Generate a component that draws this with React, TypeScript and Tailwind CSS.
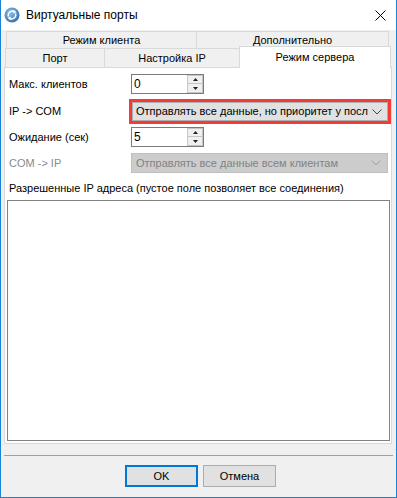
import React from "react";

const font = { fontFamily: '"Liberation Sans", Arial, sans-serif' };

function AppIcon() {
  return (
    <svg width="16" height="16" viewBox="0 0 16 16" className="shrink-0">
      <defs>
        <radialGradient id="g" cx="40%" cy="35%" r="70%">
          <stop offset="0%" stopColor="#8fc3ea" />
          <stop offset="100%" stopColor="#2f6fa8" />
        </radialGradient>
      </defs>
      <circle cx="8" cy="8" r="7.5" fill="url(#g)" />
      <path d="M4.5 9.5 A4 4 0 0 1 10.5 4.8" stroke="#fff" strokeWidth="1.4" fill="none" />
      <path d="M9.6 3.4 L11.4 5 L9.3 6" stroke="#fff" strokeWidth="1.2" fill="none" />
      <path d="M11.5 6.5 A4 4 0 0 1 5.5 11.2" stroke="#fff" strokeWidth="1.4" fill="none" />
      <path d="M6.4 12.6 L4.6 11 L6.7 10" stroke="#fff" strokeWidth="1.2" fill="none" />
    </svg>
  );
}

function Chevron({ color }: { color: string }) {
  return (
    <svg width="10" height="6" viewBox="0 0 10 6" className="shrink-0">
      <polyline points="0.5,0.5 5,5 9.5,0.5" fill="none" stroke={color} strokeWidth="1" />
    </svg>
  );
}

function SpinBox({ value }: { value: string }) {
  return (
    <div className="flex h-[20px] w-[73px] border border-[#7a7a7a] bg-white">
      <div className="flex-1 pl-[2px] text-[12px] leading-[18px] text-black">{value}</div>
      <div className="flex w-[16px] flex-col">
        <div className="flex h-[9px] items-center justify-center border border-[#c6c6c6] bg-[#f0f0f0]">
          <svg width="5" height="3" viewBox="0 0 5 3">
            <polygon points="2.5,0 5,3 0,3" fill="#222" />
          </svg>
        </div>
        <div className="flex h-[9px] items-center justify-center border border-t-0 border-[#c6c6c6] bg-[#f0f0f0]">
          <svg width="5" height="3" viewBox="0 0 5 3">
            <polygon points="0,0 5,0 2.5,3" fill="#222" />
          </svg>
        </div>
      </div>
    </div>
  );
}

function Tab({ label, className }: { label: string; className: string }) {
  return (
    <div
      className={`flex items-center justify-center border border-[#d9d9d9] bg-[#f0f0f0] text-[11px] text-black ${className}`}
    >
      {label}
    </div>
  );
}

export default function App() {
  return (
    <div
      className="flex h-[498px] w-[397px] flex-col border-x border-b border-[#1883d7] bg-[#f0f0f0] text-black"
      style={font}
    >
      {/* Title bar */}
      <div className="flex h-[30px] shrink-0 items-center bg-white pl-[3px] pr-[10px]">
        <AppIcon />
        <span className="ml-[6px] flex-1 text-[12px]">Виртуальные порты</span>
        <svg width="11" height="11" viewBox="0 0 11 11">
          <path d="M0.5 0.5 L10.5 10.5 M10.5 0.5 L0.5 10.5" stroke="#000" strokeWidth="1" />
        </svg>
      </div>

      {/* Tabs */}
      <div className="flex flex-col pl-[3px] pr-[4px] pt-[1px]">
        <div className="flex h-[18px] pl-[2px]">
          <Tab label="Режим клиента" className="w-[191px]" />
          <Tab label="Дополнительно" className="-ml-px w-[193px]" />
        </div>
        <div className="-mt-px flex h-[19px] pl-[1px]">
          <Tab label="Порт" className="w-[100px] border-b-0" />
          <Tab label="Настройка IP" className="-ml-px w-[136px] border-b-0" />
          <div className="relative z-10 -ml-px -mt-[2px] flex h-[22px] w-[152px] items-center justify-center border border-b-0 border-[#d9d9d9] bg-white text-[11px]">
            Режим сервера
          </div>
        </div>

        {/* Panel */}
        <div className="flex h-[377px] flex-col border border-[#d9d9d9] bg-white pl-[4px] text-[11px]">
          <div className="mt-[6px] flex h-[20px] items-center">
            <span className="w-[122px] shrink-0">Макс. клиентов</span>
            <SpinBox value="0" />
          </div>
          <div className="mt-[5px] flex h-[25px] items-center">
            <span className="w-[120px] shrink-0">IP -&gt; COM</span>
            <div className="flex h-[25px] flex-1 border-[3px] border-[#f23c3c]">
              <div className="flex flex-1 items-center justify-between border border-[#adadad] bg-[#e1e1e1] pl-[3px] pr-[5px]">
                <span className="whitespace-nowrap">Отправлять все данные, но приоритет у посл</span>
                <Chevron color="#444" />
              </div>
            </div>
          </div>
          <div className="mt-[3px] flex h-[20px] items-center">
            <span className="w-[122px] shrink-0">Ожидание (сек)</span>
            <SpinBox value="5" />
          </div>
          <div className="mt-[6px] flex h-[20px] items-center pr-[3px]">
            <span className="w-[122px] shrink-0 text-[#8a8a8a]">COM -&gt; IP</span>
            <div className="flex h-[20px] flex-1 items-center justify-between border border-[#bfbfbf] bg-[#cccccc] pl-[4px] pr-[6px] text-[#838383]">
              <span className="whitespace-nowrap">Отправлять все данные всем клиентам</span>
              <Chevron color="#a0a0a0" />
            </div>
          </div>
          <div className="mt-[8px] leading-[14px]">
            Разрешенные IP адреса (пустое поле позволяет все соединения)
          </div>
          <div className="mb-[2px] ml-[-2px] mr-[1px] mt-[5px] flex-1 border border-[#828282] bg-white" />
        </div>
      </div>

      {/* Separator */}
      <div className="mx-[3px] mt-[11px] border-t border-[#a0a0a0]" />

      {/* Buttons */}
      <div className="mt-[9px] flex gap-[5px] pl-[124px]">
        <button className="h-[22px] w-[73px] border-2 border-[#0078d7] bg-[#e1e1e1] text-[11px]">OK</button>
        <button className="h-[22px] w-[73px] border border-[#adadad] bg-[#e1e1e1] text-[11px]">Отмена</button>
      </div>
    </div>
  );
}
